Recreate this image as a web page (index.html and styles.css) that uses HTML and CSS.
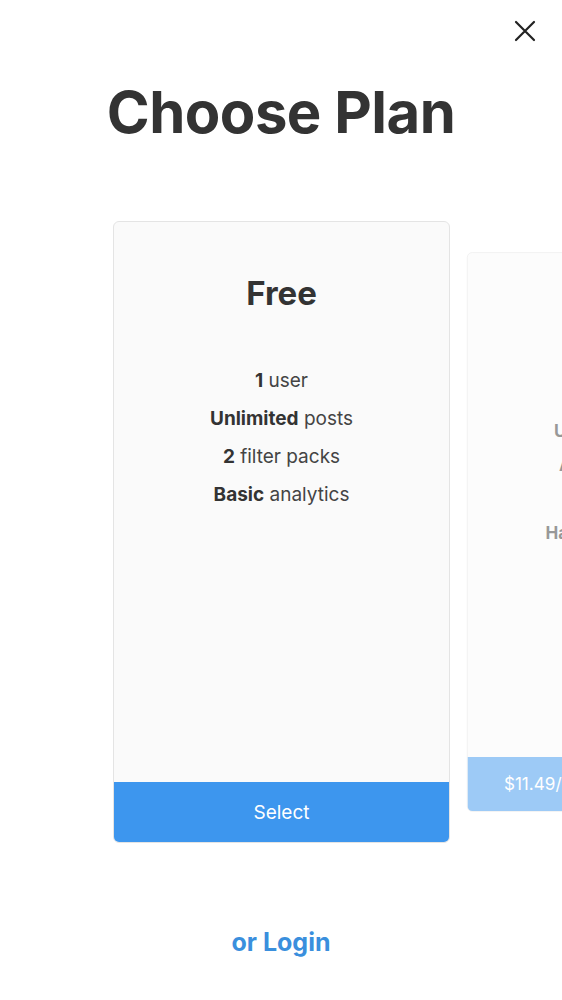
FILE: index.html
```html
<!DOCTYPE html>
<html>
<head>
<meta charset="utf-8">
<link rel="stylesheet" href="styles.css">
</head>
<body>
<div class="page">
  <div class="topbar">
    <button class="close" aria-label="Close">
      <svg width="22" height="22" viewBox="0 0 22 22"><path d="M2 2 L20 20 M20 2 L2 20" stroke="#222" stroke-width="2.2" stroke-linecap="round" fill="none"/></svg>
    </button>
  </div>
  <h1 class="title">Choose Plan</h1>
  <div class="carousel">
    <div class="track">
      <div class="card">
        <div class="card-body">
          <h2 class="plan-name">Free</h2>
          <ul class="features">
            <li><b>1</b> user</li>
            <li><b>Unlimited</b> posts</li>
            <li><b>2</b> filter packs</li>
            <li><b>Basic</b> analytics</li>
          </ul>
        </div>
        <div class="card-btn">Select</div>
      </div>
      <div class="card card-next">
        <div class="card-body">
          <h2 class="plan-name">Pro</h2>
          <div class="plan-sub">per month</div>
          <ul class="features features-next">
            <li><b>Unlimited</b> users</li>
            <li><b>All filter</b> packs</li>
            <li><b>Scheduling</b></li>
            <li><b>Hashtag</b> manager</li>
          </ul>
        </div>
        <div class="card-btn">$11.49/month billed annually</div>
      </div>
    </div>
  </div>
  <div class="login">or Login</div>
</div>
</body>
</html>
```
FILE: styles.css
```css
html, body {
  margin: 0;
  padding: 0;
  background: #ffffff;
}
body {
  font-family: Inter, "Noto Sans", "Liberation Sans", sans-serif;
  color: #333333;
  width: 562px;
  height: 1000px;
  overflow: hidden;
}
.page {
  display: flex;
  flex-direction: column;
}
.topbar {
  height: 62px;
  display: flex;
  justify-content: flex-end;
  align-items: flex-start;
  padding: 20px 26px 0 0;
  box-sizing: border-box;
}
.close {
  border: 0;
  background: none;
  padding: 0;
  width: 22px;
  height: 22px;
  display: block;
}
.close svg { display: block; }
.title {
  margin: 18px 0 0 0;
  font-size: 58px;
  line-height: 64px;
  font-weight: 700;
  text-align: center;
  letter-spacing: -0.5px;
  color: #333333;
}
.carousel {
  margin-top: 77px;
  overflow: hidden;
}
.track {
  display: flex;
  padding-left: 113px;
}
.card {
  flex: 0 0 337px;
  height: 622px;
  box-sizing: border-box;
  background: #fafafa;
  border: 1px solid #e4e4e4;
  border-radius: 6px;
  display: flex;
  flex-direction: column;
  overflow: hidden;
}
.card-next {
  transform: scale(0.9);
  opacity: 0.5;
}
.card-body {
  flex: 1;
  display: flex;
  flex-direction: column;
  align-items: center;
}
.plan-name {
  margin: 51px 0 0 0;
  font-size: 33px;
  line-height: 40px;
  font-weight: 700;
  color: #333333;
}
.plan-sub {
  font-size: 19px;
  line-height: 38px;
  color: #444444;
}
.features {
  list-style: none;
  margin: 49px 0 0 0;
  padding: 0;
  text-align: center;
  font-size: 19px;
  line-height: 38px;
  color: #444444;
}
.features-next {
  margin-top: 50px;
}
.features b {
  font-weight: 700;
  color: #333333;
}
.card-btn {
  height: 61px;
  background: #3d96ee;
  color: #ffffff;
  font-size: 19px;
  white-space: nowrap;
  display: flex;
  align-items: center;
  justify-content: center;
  margin: 0 -1px -1px -1px;
}
.login {
  margin-top: 84px;
  text-align: center;
  font-size: 25px;
  font-weight: 700;
  color: #3a8fdd;
}
```
